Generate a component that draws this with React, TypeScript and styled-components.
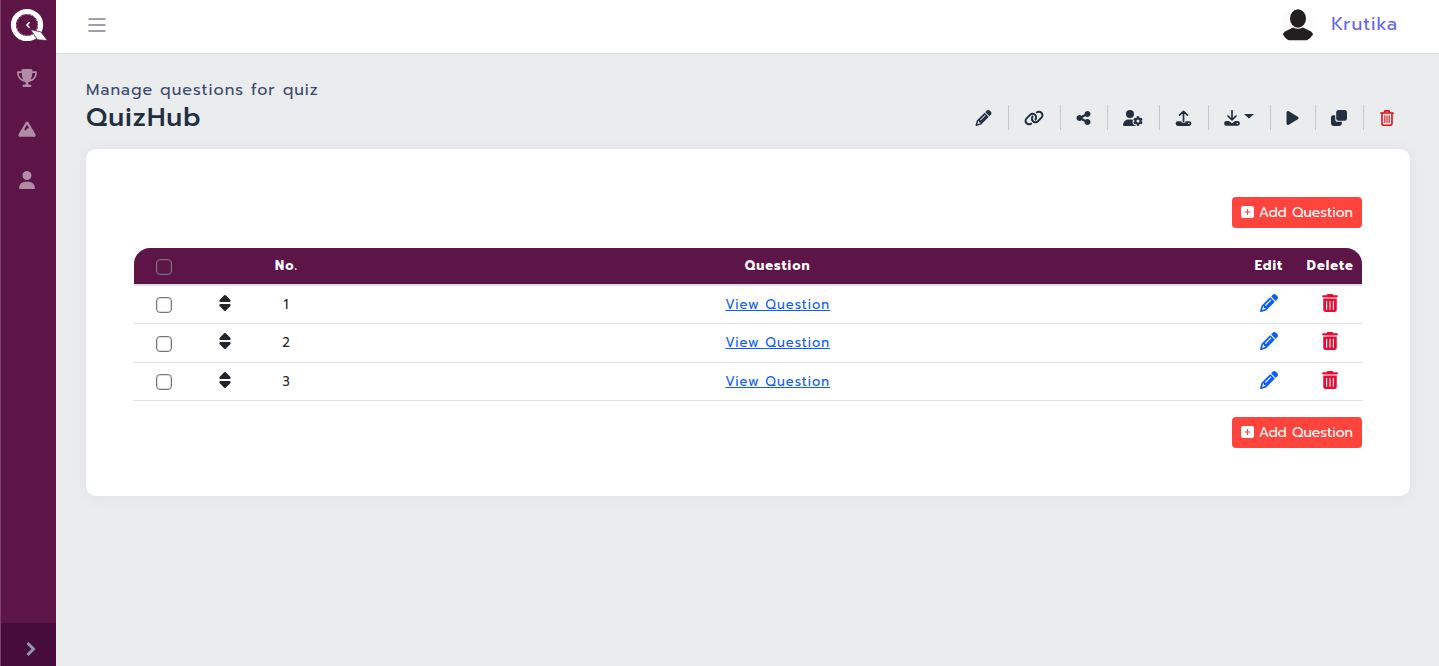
import React from 'react';
import styled, { createGlobalStyle } from 'styled-components';
import {
  FaTrophy, FaUser, FaPencil, FaLink, FaShareNodes, FaUserGear, FaPlay, FaTrashCan,
} from 'react-icons/fa6';

const GlobalStyle = createGlobalStyle`
  *, *::before, *::after { box-sizing: border-box; }
  body {
    margin: 0;
    background: #ebecee;
    font-family: Prompt, Lato, "Open Sans", sans-serif;
    letter-spacing: 1px;
    color: #212529;
  }
`;

const Shell = styled.div`
  display: flex;
  min-height: 100vh;
`;

const Sidebar = styled.nav`
  flex: none;
  display: flex;
  flex-direction: column;
  width: 56px;
  background: #5d1447;
  border-left: 1px solid #7c4069;
`;

const LogoLink = styled.a`
  display: flex;
  justify-content: center;
  padding: 8px 0 0 1px;
  height: 52px;
`;

const SideLink = styled.a`
  display: flex;
  align-items: center;
  justify-content: center;
  height: 51px;
  padding-right: 3px;
  color: #b18ca6;
  svg { width: 20px; height: 18px; }
`;

const Expand = styled.button`
  display: flex;
  align-items: center;
  justify-content: center;
  height: 43px;
  margin-top: auto;
  padding: 8px 0 0 4px;
  border: 0;
  background: #460c3b;
  color: #8d97ad;
`;

const Main = styled.div`
  flex: 1;
  min-width: 0;
`;

const TopBar = styled.header`
  display: flex;
  align-items: center;
  justify-content: space-between;
  height: 54px;
  padding: 0 41px 4px 32px;
  background: #fff;
  border-bottom: 1px solid #d8dbe0;
`;

const MenuButton = styled.button`
  display: flex;
  padding: 0;
  border: 0;
  background: none;
  color: #857f91;
`;

const Profile = styled.a`
  display: flex;
  align-items: center;
  gap: 16px;
  font-size: 18px;
  line-height: 24px;
  color: #6366f1;
  text-decoration: none;
`;

const UserName = styled.span`
  padding-bottom: 2px;
`;

const Content = styled.main`
  padding: 24px 29px 30px 30px;
`;

const PageHead = styled.div`
  display: flex;
  align-items: flex-end;
  justify-content: space-between;
  margin-bottom: 15px;
`;

const Subtitle = styled.div`
  font-size: 16px;
  line-height: 24px;
  color: #3c4b6e;
`;

const Title = styled.h1`
  margin: 0;
  font-size: 26px;
  line-height: 32px;
  font-weight: 500;
  color: #212f41;
`;

const Toolbar = styled.div`
  display: flex;
  margin-bottom: 4px;
`;

const Tool = styled.button<{ $w: number; $danger?: boolean }>`
  display: flex;
  align-items: center;
  gap: 4px;
  height: 25px;
  padding: 0 16px 0 15px;
  border: 0;
  border-right: 1px solid #c6c9cd;
  background: none;
  color: ${(p) => (p.$danger ? '#e3101a' : '#212f41')};
  &:last-child { border-right: 0; padding-left: 16px; }
  svg:first-child { width: ${(p) => p.$w}px; height: 16px; }
`;

const Card = styled.section`
  padding: 48px;
  border-radius: 10px;
  background: #fff;
  box-shadow: 0 2px 16px rgba(60, 60, 110, 0.05);
`;

const Actions = styled.div`
  display: flex;
  justify-content: flex-end;
`;

const AddButton = styled.button`
  display: flex;
  align-items: center;
  gap: 5px;
  height: 31px;
  padding: 0 9px;
  border: 0;
  border-radius: 4px;
  background: #ff433d;
  color: #fff;
  font: inherit;
  font-size: 14px;
  letter-spacing: 0;
`;

const Table = styled.table`
  width: 100%;
  margin: 20px 0 16px;
  table-layout: fixed;
  border-collapse: separate;
  border-spacing: 0;
  font-size: 13px;
  line-height: 20px;
  text-align: center;
`;

const HeadCell = styled.th<{ $width: string }>`
  width: ${(p) => p.$width};
  height: 38px;
  padding: 0 2px 0 0;
  background: #5d1447;
  border-bottom: 2px solid #dee0e6;
  color: #fff;
  font-weight: 700;
  &:first-child { border-top-left-radius: 16px; }
  &:last-child { border-top-right-radius: 16px; }
`;

const Row = styled.tr`
  height: 38px;
  &:nth-child(2) { height: 39px; }
`;

const Cell = styled.td`
  padding: 0 2px 0 0;
  border-bottom: 1px solid #dee2e6;
`;

const Check = styled.input`
  display: block;
  appearance: none;
  width: 16px;
  height: 16px;
  margin: 1px auto 0;
  border: 1px solid #767676;
  border-radius: 4px;
  background: transparent;
  box-shadow: inset 0 0 0 1px rgba(118, 118, 118, 0.25);
`;

const ViewLink = styled.a`
  color: #0d5cfd;
`;

const IconButton = styled.button<{ $color: string }>`
  display: block;
  margin: 0 auto;
  padding: 0 0 4px;
  border: 0;
  background: none;
  color: ${(p) => p.$color};
  svg { display: block; height: 18px; width: 18px; }
`;

const Logo = () => (
  <svg width="38" height="34" viewBox="0 0 38 34" aria-hidden="true">
    <circle cx="17" cy="17" r="13.6" fill="none" stroke="#fff" strokeWidth="5" />
    <circle cx="17" cy="17" r="10.500" fill="none" stroke="#b18ca6" strokeWidth="1" strokeDasharray="2 1.500" />
    <path d="M20.500 21.500 31 24 37.500 32.500 27.500 31.800Z" fill="#fff" stroke="#5d1447" strokeWidth="0.8" />
    <path d="M19.500 14.300 17 17 19.500 19.700" fill="none" stroke="#fff" strokeWidth="1.6" />
  </svg>
);

const Mountain = () => (
  <svg viewBox="0 0 20 18" fill="currentColor" aria-hidden="true">
    <path fillRule="evenodd" d="M8.700 2.200a1.600 1.600 0 0 1 2.700 0l7 12a1.700 1.700 0 0 1-1.500 2.600H3.100a1.700 1.700 0 0 1-1.500-2.600ZM10 4.500 7.300 9.300l1.300 1.500 1.900-2.600h1.700Z" />
  </svg>
);

const Chevron = () => (
  <svg width="14" height="18" viewBox="0 0 14 18" fill="none" stroke="currentColor" strokeWidth="3" aria-hidden="true">
    <path d="M3.500 3 9.500 9 3.500 15" />
  </svg>
);

const Menu = () => (
  <svg width="18" height="14" viewBox="0 0 18 14" stroke="currentColor" strokeWidth="1.6" strokeLinecap="round" aria-hidden="true">
    <path d="M1 1H17M1 7H17M1 13H17" />
  </svg>
);

const Avatar = () => (
  <svg width="34" height="34" viewBox="0 0 34 34" aria-hidden="true">
    <circle cx="17" cy="17" r="17" fill="#fcfcfc" />
    <ellipse cx="17" cy="10.500" rx="8" ry="9.300" fill="#231f20" />
    <path d="M12 19.500Q17 22 22 19.500L30 23.500Q32 25 32 26.500Q29 31 26 32.200H8Q4.500 31 2 26.500Q2 25 4 23.500Z" fill="#231f20" />
  </svg>
);

const Tray = ({ down }: { down?: boolean }) => (
  <svg viewBox="0 0 16 16" fill="none" stroke="currentColor" aria-hidden="true">
    <path
      d={down ? 'M8 .8V9.500M4 6 8 9.800 12 6' : 'M8 11.500V1.500M4 5.200 8 1.300 12 5.200'}
      strokeWidth="1.7" strokeLinecap="round" strokeLinejoin="round"
    />
    <path
      fill="currentColor" stroke="none" fillRule="evenodd"
      d={(down ? 'M2.500 11H4.900L8 13.200 11.100 11H13.500' : 'M2.500 11.200H6V12.200Q8 13.700 10 12.200V11.200H13.500')
        + 'a2.400 2.400 0 0 1 0 4.800H2.500a2.400 2.400 0 0 1 0-4.800ZM13.300 12.700a.7.7 0 1 0 0 1.400a.7.7 0 1 0 0-1.400Z'}
    />
  </svg>
);

const Clone = () => (
  <svg viewBox="0 0 16 16" fill="currentColor" aria-hidden="true">
    <rect x="5.200" y="0" width="10.800" height="10.800" rx="2.400" />
    <path d="M4.200 5.200V9.200a2.600 2.600 0 0 0 2.600 2.600H10.800V13.600a2.400 2.400 0 0 1-2.400 2.400H2.400A2.400 2.400 0 0 1 0 13.600V7.600a2.400 2.400 0 0 1 2.400-2.400Z" />
  </svg>
);

const TrashOutline = () => (
  <svg viewBox="0 0 14 16" fill="none" stroke="currentColor" strokeWidth="1.600" strokeLinecap="round" aria-hidden="true">
    <path d="M.8 3H13.200M4 3 5 .9H9L10 3M2 3V13.200a2 2 0 0 0 2 2h6a2 2 0 0 0 2-2V3" />
    <path d="M4.800 5.800V12.500M7 5.800V12.500M9.200 5.800V12.500" strokeWidth="1.100" />
  </svg>
);

const Caret = () => (
  <svg width="10" height="8" viewBox="0 0 10 8" fill="currentColor" aria-hidden="true">
    <path d="M0 0H10L5 4.500Z" />
  </svg>
);

const Sort = () => (
  <svg viewBox="0 0 18 18" fill="currentColor" aria-hidden="true">
    <path d="M8.200 1.300Q9 .6 9.800 1.300L14.500 6Q15.200 8 13.600 8H4.400Q2.800 8 3.500 6ZM4.400 10H13.600Q15.200 10 14.500 12L9.800 16.700Q9 17.400 8.200 16.700L3.500 12Q2.800 10 4.400 10Z" />
  </svg>
);

const PlusSquare = () => (
  <svg width="13" height="15" viewBox="0 0 13 15" aria-hidden="true">
    <rect y="1" width="13" height="12" rx="2" fill="#fff" />
    <path d="M6.500 4.500V9.500M4 7H9" stroke="#ff433d" strokeWidth="1.200" strokeLinecap="round" />
  </svg>
);

const AddQuestion = () => (
  <Actions>
    <AddButton type="button"><PlusSquare /> Add Question</AddButton>
  </Actions>
);

const questions = [1, 2, 3];

export default function App() {
  return (
    <>
      <GlobalStyle />
      <Shell>
        <Sidebar aria-label="Main">
          <LogoLink href="#" aria-label="Home"><Logo /></LogoLink>
          <SideLink href="#" aria-label="Trophies"><FaTrophy /></SideLink>
          <SideLink href="#" aria-label="Challenges"><Mountain /></SideLink>
          <SideLink href="#" aria-label="Profile"><FaUser /></SideLink>
          <Expand type="button" aria-label="Expand"><Chevron /></Expand>
        </Sidebar>
        <Main>
          <TopBar>
            <MenuButton type="button" aria-label="Menu"><Menu /></MenuButton>
            <Profile href="#"><Avatar /><UserName>Krutika</UserName></Profile>
          </TopBar>
          <Content>
            <PageHead>
              <div>
                <Subtitle>Manage questions for quiz</Subtitle>
                <Title>QuizHub</Title>
              </div>
              <Toolbar>
                <Tool type="button" $w={17} aria-label="Edit quiz"><FaPencil /></Tool>
                <Tool type="button" $w={20} aria-label="Copy link"><FaLink /></Tool>
                <Tool type="button" $w={15} aria-label="Share"><FaShareNodes /></Tool>
                <Tool type="button" $w={20} aria-label="Manage users"><FaUserGear /></Tool>
                <Tool type="button" $w={17} aria-label="Upload"><Tray /></Tool>
                <Tool type="button" $w={16} aria-label="Download"><Tray down /><Caret /></Tool>
                <Tool type="button" $w={13} aria-label="Play"><FaPlay /></Tool>
                <Tool type="button" $w={16} aria-label="Duplicate"><Clone /></Tool>
                <Tool type="button" $w={14} $danger aria-label="Delete quiz"><TrashOutline /></Tool>
              </Toolbar>
            </PageHead>
            <Card>
              <AddQuestion />
              <Table>
                <thead>
                  <tr>
                    <HeadCell $width="5%"><Check type="checkbox" aria-label="Select all questions" /></HeadCell>
                    <HeadCell $width="5%" />
                    <HeadCell $width="5%">No.</HeadCell>
                    <HeadCell $width="75%">Question</HeadCell>
                    <HeadCell $width="5%">Edit</HeadCell>
                    <HeadCell $width="5%">Delete</HeadCell>
                  </tr>
                </thead>
                <tbody>
                  {questions.map((n) => (
                    <Row key={n}>
                      <Cell><Check type="checkbox" aria-label={`Select question ${n}`} /></Cell>
                      <Cell><IconButton type="button" $color="#212529" aria-label={`Move question ${n}`}><Sort /></IconButton></Cell>
                      <Cell>{n}</Cell>
                      <Cell><ViewLink href="#">View Question</ViewLink></Cell>
                      <Cell><IconButton type="button" $color="#0d5cfd" aria-label={`Edit question ${n}`}><FaPencil /></IconButton></Cell>
                      <Cell><IconButton type="button" $color="#eb0a32" aria-label={`Delete question ${n}`}><FaTrashCan /></IconButton></Cell>
                    </Row>
                  ))}
                </tbody>
              </Table>
              <AddQuestion />
            </Card>
          </Content>
        </Main>
      </Shell>
    </>
  );
}
